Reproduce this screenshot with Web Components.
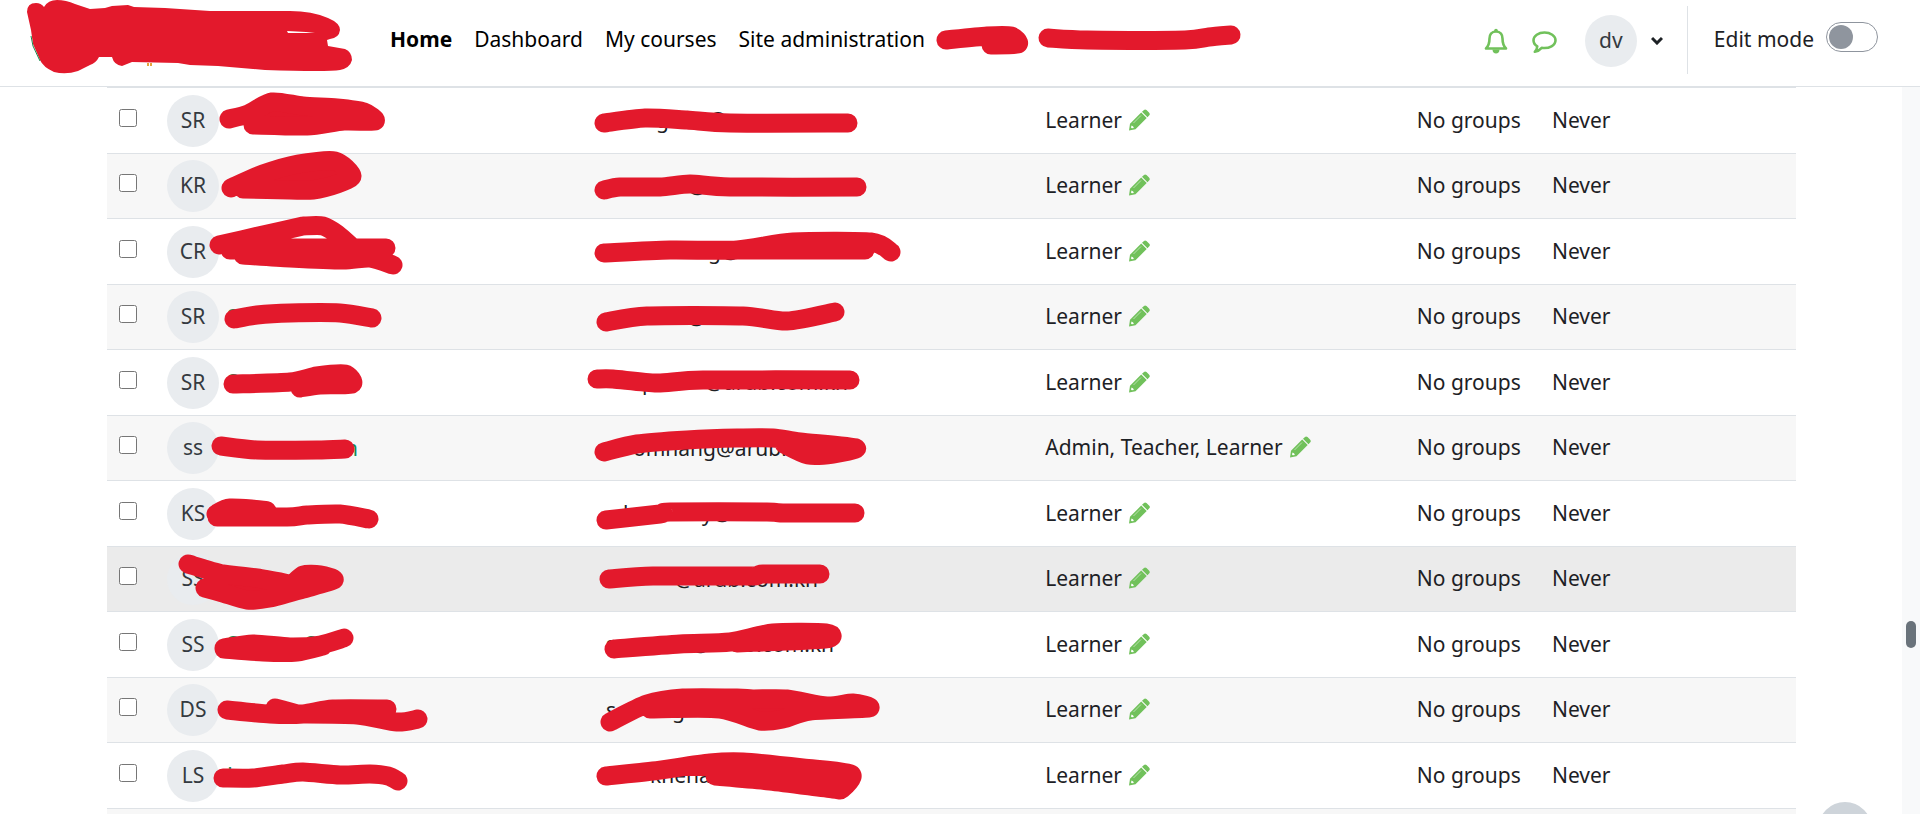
<!DOCTYPE html>
<html lang="en">
<head>
<meta charset="utf-8">
<title>Participants</title>
<style>
  html, body {
    margin: 0;
    height: 100%;
    overflow: hidden;
  }

  body {
    background: #fff;
    color: #1d2125;
    font-family: "Noto Sans", sans-serif;
    font-size: 21px;
    line-height: 32px;
  }
</style>
</head>
<body>
<moodle-page>
  <site-header slot="header"></site-header>
  <participants-table></participants-table>
</moodle-page>

<script>
const ICONS = {
  pencil: `
    <svg viewBox="-3 -2 26 26" aria-hidden="true">
      <path d="M15 1Q16 0 17.5 1L20 3.500Q21.500 5 20.500 6L18.500 8.200L13 2.700ZM12.200 3.600L17.700 9.100L6.500 20.200L0 21.500L1 14.800Z"/>
      <path d="M12 6.500L4.500 14" fill="none" stroke="#fff" stroke-width=".5"/>
      <path d="M2.500 16.500L4.200 17.500L4.800 19L2.800 19.300L2 18.500Z" fill="#fff"/>
    </svg>`,
  bell: `
    <svg viewBox="0 0 26 26" aria-hidden="true">
      <path d="M13 3.500C8.500 3.500 6.500 7 6.500 10.500C6.500 15.500 5.500 18 3 20.500H23C20.500 18 19.500 15.500 19.500 10.500C19.500 7 17.500 3.500 13 3.500Z" fill="none" stroke="currentColor" stroke-width="2.600" stroke-linejoin="round"/>
      <circle cx="13" cy="2.500" r="1.800"/>
      <path d="M9.500 21.500H16.500C16.500 24 15 25.500 13 25.500C11 25.500 9.500 24 9.500 21.500Z"/>
    </svg>`,
  comment: `
    <svg viewBox="0 0 26 26" aria-hidden="true">
      <path d="M13.500 4.500C7.500 4.500 2.500 7.800 2.500 12.200C2.500 14.800 4 17 6.300 18.300C6.200 20.500 5.200 22.300 3.800 23.800C6.800 23.300 9 21.700 10.700 19.800C18.500 20.800 24.500 17.300 24.500 12.200C24.500 7.800 19.500 4.500 13.500 4.500Z" fill="none" stroke="currentColor" stroke-width="2.600" stroke-linejoin="round"/>
    </svg>`,
};

// name / email: pen strokes, "x,y x,y ..." per stroke, strokes split by "|"
// nameBits / emailBits: the letters that still show around the pen
const ROWS = [
  { initials: "SR",
    name: "74,31 93,26 117,14 148,18 182,20 209,24 220,33 189,33 152,38 98,37",
    email: "10,35 51,30 93,32 136,35 254,35",
    emailBits: [[62, "g"], [114, "@"]] },
  { initials: "KR",
    name: "76,34 108,20 143,10 180,7 197,22 182,30 158,36 135,36 88,35",
    email: "10,36 26,33 66,33 96,30 136,33 263,33",
    emailBits: [[94, "@"]] },
  { initials: "CR",
    name: "64,26 108,16 148,7|148,7 168,7 182,15 198,29|231,29 135,29 75,31|88,36 135,39 188,41 215,39 238,46",
    email: "10,34 76,31 143,31 199,23 277,23 297,33|143,31 271,31",
    emailBits: [[114, "g@arub.com"]] },
  { initials: "SR",
    name: "79,34 102,30 135,28 185,28 217,33",
    nameBits: [[72, "S"]],
    email: "12,37 53,31 149,31 193,36 241,27",
    emailBits: [[93, "@"]] },
  { initials: "SR",
    name: "78,34 135,32 162,26 190,24 197,34 165,35 145,38",
    nameBits: [[72, "S"]],
    email: "3,29 19,29 63,33 109,30 256,30",
    emailBits: [[48, "p"], [111, "@arub.com.kh"]] },
  { initials: "ss", roles: "Admin, Teacher, Learner",
    name: "66,30 102,34 162,34 190,33",
    nameBits: [[190, "n"]],
    email: "10,36 43,28 93,24 143,22 179,22 206,26 262,32 239,38 214,39 190,28",
    emailBits: [[39, "omnang@arub."]] },
  { initials: "KS",
    name: "61,33 75,27 112,30 62,35|62,36 132,36 152,34 185,33 214,38",
    email: "12,39 66,33 76,31 173,31 189,32 261,32",
    emailBits: [[29, "h"], [108, "y@"]] },
  { initials: "SS", hover: true,
    name: "33,17 68,27 102,31 135,37|68,27 102,31 135,37 148,28 165,28 179,33 148,42 115,51 92,53 68,46 50,41",
    nameBits: [[135, "S"]],
    email: "15,32 59,29 156,29 169,27 226,27",
    emailBits: [[81, "@arub.com.kh"]] },
  { initials: "SS",
    name: "69,36 98,32 135,35 165,33 189,26|69,37 108,40 142,40 168,34",
    nameBits: [[72, "S"], [150, "S"]],
    email: "20,37 86,32 136,30 179,21 232,21 231,27 143,31",
    emailBits: [[12, "s"], [97, "@arub.com.kh"]] },
  { initials: "DS",
    name: "72,32 115,36 148,36 178,31 232,31|120,30 135,34 142,36|142,36 202,37 242,44 263,41",
    email: "16,44 53,26 89,20 143,20 159,21 193,21 233,28 259,25 275,30 216,33 189,41 166,43 126,31 56,31",
    emailBits: [[12, "s"], [78, "g"]] },
  { initials: "LS",
    name: "68,35 98,35 128,31 148,29 185,32 215,31 233,33 243,38",
    nameBits: [[72, "L"]],
    email: "12,33 59,28 116,20 149,19 209,25 257,31 248,46 239,46 176,38 121,33",
    emailBits: [[56, "khena"]] },
];

// smooth curve that goes through every point of a stroke
function smooth(stroke) {
  const p = stroke.trim().split(" ").map((s) => s.split(",").map(Number));
  let d = `M${p[0]}`;
  for (let i = 0; i < p.length - 1; i++) {
    const a = p[i - 1] || p[i];
    const b = p[i];
    const c = p[i + 1];
    const e = p[i + 2] || c;
    d += ` C${b[0] + (c[0] - a[0]) / 8},${b[1] + (c[1] - a[1]) / 8}`;
    d += ` ${c[0] - (e[0] - b[0]) / 8},${c[1] - (e[1] - b[1]) / 8} ${c}`;
  }
  return d;
}

class FaIcon extends HTMLElement {
  constructor() {
    super();
    this.attachShadow({ mode: "open" });
  }

  connectedCallback() {
    this.shadowRoot.innerHTML = `
      <style>
        :host { display: inline-flex; color: #71c15b; }
        svg { width: 26px; height: 26px; fill: currentColor; }
      </style>
      ${ICONS[this.getAttribute("name")]}
    `;
  }
}
customElements.define("fa-icon", FaIcon);

class PenMark extends HTMLElement {
  constructor() {
    super();
    this.attachShadow({ mode: "open" });
  }

  connectedCallback() {
    const strokes = this.getAttribute("strokes").split("|").map(smooth).join(" ");
    this.shadowRoot.innerHTML = `
      <style>
        :host { display: block; height: 32px; pointer-events: none; }
        svg { display: block; width: 100%; height: 100%; overflow: visible; }
        path {
          fill: #e3192c;
          stroke: #e3192c;
          stroke-width: 19px;
          stroke-linecap: round;
          stroke-linejoin: round;
        }
      </style>
      <svg aria-hidden="true"><path d="${strokes}"/></svg>
    `;
  }
}
customElements.define("pen-mark", PenMark);

class UserAvatar extends HTMLElement {
  constructor() {
    super();
    this.attachShadow({ mode: "open" });
    this.shadowRoot.innerHTML = `
      <style>
        :host {
          display: flex;
          box-sizing: border-box;
          align-items: center;
          justify-content: center;
          width: 52px;
          height: 52px;
          padding-bottom: 2px;
          border-radius: 50%;
          background: #e9ecef;
          color: #343a40;
        }
      </style>
      <slot></slot>
    `;
  }
}
customElements.define("user-avatar", UserAvatar);

class SiteHeader extends HTMLElement {
  constructor() {
    super();
    this.attachShadow({ mode: "open" });
  }

  getTemplate() {
    const template = document.createElement("template");
    template.innerHTML = `
      <header>
        <a class="brand" href="#" aria-label="Site home">
          <svg viewBox="0 0 379 86" aria-hidden="true">
            <path fill="#e3192c" fill-rule="evenodd" d="M27 12Q27 3 36 3Q41 3 44 7Q48 0 57 0Q66 0 75 4L90 9L105 8L112 6L128 5L134 7L165 8L210 11L290 11Q312 11 328 18Q340 23 340 30Q339 38 330 39L327 40L328 46L345 49Q352 52 352 60Q350 68 340 70Q328 72 265 70L218 66L190 65L178 63L132 62L122 66Q114 65 112 57L99 57Q96 63 90 65L78 71Q66 75 54 72Q43 67 40 60L33 44L31 30ZM287 31L288 33L315 33L306 32Z"/>
            <path stroke="#1c8a50" d="M31 36L33 46L40 61" fill="none"/>
            <path stroke="#e5a43c" stroke-width="2" d="M148 63V66M151 63V66" fill="none"/>
          </svg>
        </a>
        <nav>
          <a class="active" href="#">Home</a>
          <a href="#">Dashboard</a>
          <a href="#">My courses</a>
          <a href="#">Site administration</a>
          <a class="marked short" href="#" aria-label="Menu item"><pen-mark strokes="10,17 51,13 75,13 82,21 55,22"></pen-mark></a>
          <a class="marked long" href="#" aria-label="Menu item"><pen-mark strokes="10,15 49,17 147,17 171,14 193,12"></pen-mark></a>
        </nav>
        <div class="tools">
          <button class="icon" aria-label="Notifications"><fa-icon name="bell"></fa-icon></button>
          <button class="icon" aria-label="Messages"><fa-icon name="comment"></fa-icon></button>
          <button class="user" aria-label="User menu">
            <user-avatar>dv</user-avatar>
            <svg width="12" height="9" viewBox="0 0 12 9" aria-hidden="true"><path d="M1 2L6 7L11 2" fill="none" stroke="#1d2125" stroke-width="3"/></svg>
          </button>
        </div>
        <div class="edit">
          <label for="editmode">Edit mode</label>
          <input id="editmode" type="checkbox" role="switch">
        </div>
      </header>
      ${this.getStyles()}
    `;
    return template;
  }

  getStyles() {
    return `
      <style>
        :host { display: block; }

        header {
          display: flex;
          align-items: center;
          height: 86px;
          border-bottom: 1px solid #dee2e6;
          background: #fff;
        }

        .brand { width: 379px; height: 86px; flex: none; }
        .brand svg { display: block; width: 100%; height: 100%; }

        nav { display: flex; padding-bottom: 8px; }
        nav a {
          padding: 0 11px;
          color: #000;
          text-decoration: none;
          white-space: nowrap;
        }
        nav .active { font-weight: 700; }
        nav .marked { padding: 0; }
        nav .short { width: 92px; margin-right: 10px; }
        nav .long { width: 203px; }

        .tools {
          display: flex;
          align-items: center;
          margin-left: auto;
          padding: 0 24px 5px 0;
          gap: 22px;
        }
        button {
          display: flex;
          align-items: center;
          padding: 0;
          border: 0;
          background: none;
          font: inherit;
        }
        .user { margin-left: 6px; gap: 14px; }

        .edit {
          display: flex;
          align-items: center;
          box-sizing: border-box;
          height: 68px;
          margin-bottom: 6px;
          padding: 0 42px 6px 26px;
          border-left: 1px solid #dee2e6;
          gap: 12px;
        }
        .edit label { padding-top: 4px; }

        input {
          display: flex;
          align-items: center;
          appearance: none;
          width: 52px;
          height: 30px;
          margin: 0;
          padding: 0 2px;
          box-sizing: border-box;
          border: 1px solid #8f959e;
          border-radius: 15px;
          background: #fff;
        }
        input::before {
          content: "";
          width: 24px;
          height: 24px;
          border-radius: 50%;
          background: #8f959e;
        }
      </style>
    `;
  }

  connectedCallback() {
    this.shadowRoot.appendChild(this.getTemplate().content.cloneNode(true));
  }
}
customElements.define("site-header", SiteHeader);

class ParticipantsTable extends HTMLElement {
  constructor() {
    super();
    this.attachShadow({ mode: "open" });
  }

  getBits(bits = []) {
    const text = bits.map(([x, t]) => `<text x="${x}" y="40">${t}</text>`).join("");
    return `<svg class="bits">${text}</svg>`;
  }

  getRow(row) {
    return `
      <tr class="${row.hover ? "hover" : ""}">
        <td><input type="checkbox" aria-label="Select ${row.initials}"></td>
        <td class="name">
          <user-avatar>${row.initials}</user-avatar>
          ${this.getBits(row.nameBits)}
          <pen-mark strokes="${row.name}"></pen-mark>
        </td>
        <td class="email">
          ${this.getBits(row.emailBits)}
          <pen-mark strokes="${row.email}"></pen-mark>
        </td>
        <td>
          <div class="roles">${row.roles || "Learner"} <a href="#" aria-label="Edit roles"><fa-icon name="pencil"></fa-icon></a></div>
        </td>
        <td>No groups</td>
        <td>Never</td>
      </tr>
    `;
  }

  connectedCallback() {
    this.shadowRoot.innerHTML = `
      <style>
        :host { display: block; }

        table {
          width: 100%;
          table-layout: fixed;
          border-collapse: separate;
          border-spacing: 0;
        }
        .c-select { width: 48px; }
        .c-wide { width: 26%; }
        .c-roles { width: 22%; }
        .c-groups { width: 8%; }

        tr { height: 65px; }
        tr:nth-child(odd) { height: 66px; }
        tr:nth-child(even) { background: #f7f7f7; }
        tr.hover { background: #ebebeb; }

        td {
          position: relative;
          box-sizing: border-box;
          padding: 0 12px 2px;
          border-top: 1px solid #dee2e6;
          white-space: nowrap;
        }
        td.name { padding-bottom: 0; }

        td > input {
          display: block;
          width: 18px;
          height: 18px;
          margin: 0 0 4px;
        }

        .roles { display: flex; align-items: center; gap: 4px; }
        .roles a { display: flex; }

        /* the pen runs over the cell and its neighbours */
        .bits, pen-mark {
          position: absolute;
          inset: 0;
          width: 100%;
          height: 100%;
          overflow: visible;
        }
        .name .bits { fill: #128a55; }
        .email .bits { fill: #1d2125; }
      </style>
      <table>
        <colgroup>
          <col class="c-select"><col class="c-wide"><col class="c-wide"><col class="c-roles"><col class="c-groups"><col>
        </colgroup>
        <tbody>
          ${ROWS.map((row) => this.getRow(row)).join("")}
          <tr><td></td><td></td><td></td><td></td><td></td><td></td></tr>
        </tbody>
      </table>
    `;
  }
}
customElements.define("participants-table", ParticipantsTable);

class MoodlePage extends HTMLElement {
  constructor() {
    super();
    this.attachShadow({ mode: "open" });
    this.shadowRoot.innerHTML = `
      <style>
        :host {
          display: flex;
          flex-direction: column;
          height: 100vh;
          overflow: hidden;
        }
        .body { display: flex; flex: 1; min-height: 0; }
        main { flex: 1; padding: 0 106px 0 107px; overflow: hidden; }

        .track { width: 18px; background: #f8f9fa; }
        .thumb {
          width: 10px;
          height: 27px;
          margin: 534px auto 0;
          border-radius: 5px;
          background: #6a737b;
        }

        .footer {
          position: fixed;
          right: 48px;
          bottom: -42px;
          width: 54px;
          height: 54px;
          border: 0;
          border-radius: 50%;
          background: #ced4da;
        }
      </style>
      <slot name="header"></slot>
      <div class="body">
        <main><slot></slot></main>
        <div class="track"><div class="thumb"></div></div>
      </div>
      <button class="footer" aria-label="Show footer"></button>
    `;
  }
}
customElements.define("moodle-page", MoodlePage);
</script>
</body>
</html>
